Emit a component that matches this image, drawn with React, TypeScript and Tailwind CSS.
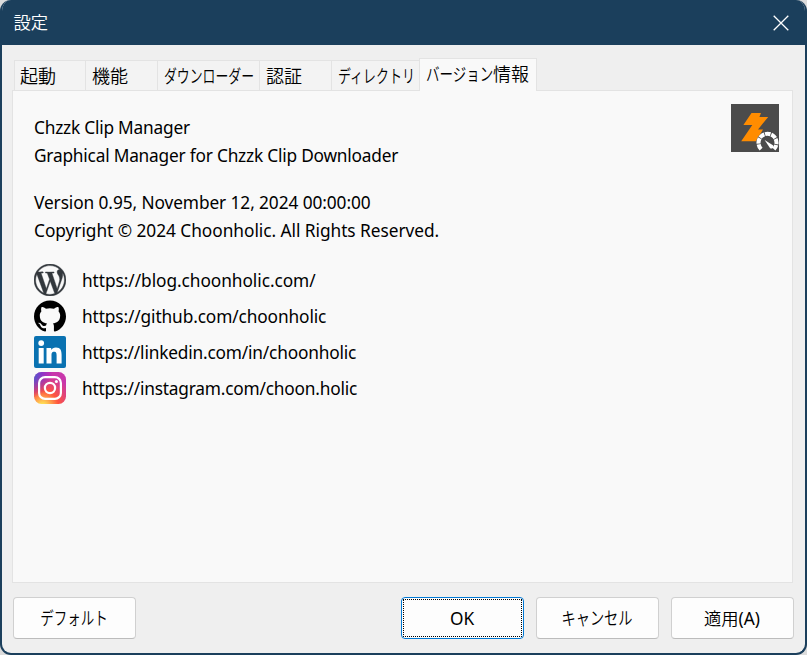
import React from "react";
import { SiWordpress, SiGithub } from "react-icons/si";

const font = "font-['Noto_Sans','Noto_Sans_CJK_JP',sans-serif]";
// Japanese labels use the DemiLight cut of the CJK family.
const lines = [
  { text: "Chzzk Clip Manager", cls: "tracking-[-0.22px]" },
  { text: "Graphical Manager for Chzzk Clip Downloader", cls: "tracking-[-0.21px]" },
  { text: "Version 0.95, November 12, 2024 00:00:00", cls: "mt-[19px] tracking-[-0.09px]" },
  { text: "Copyright © 2024 Choonholic. All Rights Reserved.", cls: "tracking-[-0.04px]" },
];

function InstagramIcon() {
  return (
    <svg viewBox="0 0 32 32" className="size-8">
      <defs>
        <radialGradient id="warm" cx="0.27" cy="1.08" r="1">
          <stop offset="0" stopColor="#ffdd55" />
          <stop offset="0.1" stopColor="#ffdd55" />
          <stop offset="0.5" stopColor="#ff543e" />
          <stop offset="1" stopColor="#c837ab" />
        </radialGradient>
        <radialGradient id="cool" cx="-0.17" cy="0.07" r="0.75">
          <stop offset="0" stopColor="#3771c8" />
          <stop offset="0.13" stopColor="#3771c8" />
          <stop offset="1" stopColor="#6600ff" stopOpacity="0" />
        </radialGradient>
      </defs>
      <rect width="32" height="32" rx="7.5" fill="url(#warm)" />
      <rect width="32" height="32" rx="7.5" fill="url(#cool)" />
      <rect x="5.1" y="5.1" width="21.8" height="21.8" rx="6" fill="none" stroke="#fff" strokeWidth="2.2" />
      <circle cx="16" cy="16" r="5.1" fill="none" stroke="#fff" strokeWidth="2.2" />
      <circle cx="22.4" cy="9.6" r="1.5" fill="#fff" />
    </svg>
  );
}

function LinkedinIcon() {
  return (
    <svg viewBox="0 0 32 32" className="size-8">
      <rect width="32" height="32" rx="2" fill="#0a72b1" />
      <circle cx="7.2" cy="7.1" r="2.9" fill="#fff" />
      <path
        fill="#fff"
        d="M4.7 11.9h5v15.5h-5zM12.5 11.9h4.7v2.2c.8-1.4 2.4-2.6 4.7-2.6 4.8 0 5.7 3.1 5.7 7.3v8.6h-5v-7.6c0-1.8 0-4-2.5-4s-2.6 1.9-2.6 3.9v7.7h-5z"
      />
    </svg>
  );
}

const links = [
  {
    url: "https://blog.choonholic.com/",
    icon: <SiWordpress className="size-8 text-[#32373c]" strokeWidth={0.3} />,
    cls: "tracking-[-0.06px]",
  },
  { url: "https://github.com/choonholic", icon: <SiGithub className="size-8 text-black" />, cls: "tracking-[-0.12px]" },
  { url: "https://linkedin.com/in/choonholic", icon: <LinkedinIcon />, cls: "tracking-[-0.18px]" },
  { url: "https://instagram.com/choon.holic", icon: <InstagramIcon />, cls: "tracking-[-0.2px]" },
];

const tabs = [
  { label: "起動", box: "w-[71px] pl-[5px]", text: "" },
  { label: "機能", box: "w-[72px] pl-[6px]", text: "" },
  { label: "ダウンローダー", box: "w-[102px] pl-[6px]", text: "scale-x-[0.715]" },
  { label: "認証", box: "w-[72px] pl-[6px]", text: "" },
  { label: "ディレクトリ", box: "w-[88px] pl-[6px]", text: "scale-x-[0.72]" },
];

function Button({ children, focused = false }: { children: React.ReactNode; focused?: boolean }) {
  return (
    <button
      className={
        focused
          ? "h-[42px] w-[123px] shrink-0 rounded-[4px] border border-[#0078d4] bg-[#fdfdfd] p-px"
          : "h-[42px] w-[123px] shrink-0 rounded-[4px] border border-[#d0d0d0] border-b-[#bcbcbc] bg-[#fdfdfd] p-px"
      }
    >
      <span
        className={
          focused
            ? "flex size-full items-center justify-center border border-dotted border-black pt-px pr-px"
            : "flex size-full items-center justify-center pt-px pr-px"
        }
      >
        {children}
      </span>
    </button>
  );
}

function AppLogo() {
  return (
    <svg viewBox="0 0 48 48" className="size-12">
      <rect width="48" height="48" fill="#4b4b4b" />
      <path d="M20.5 9H30l-1.6 3.9h8.8L27 25.5h5L25 37.3H10.2L21.3 21h-8.9z" fill="#ff8c00" />
      <path
        d="M30.1 45.1a9 9 0 1 1 12.8 0"
        transform="translate(0 .2)"
        fill="none"
        stroke="#4b4b4b"
        strokeWidth="4.6"
      />
      <circle cx="36.5" cy="38.7" r="7" fill="#4b4b4b" />
      <path
        d="M30.1 45.1a9 9 0 1 1 12.8 0"
        fill="none"
        stroke="#fff"
        strokeWidth="4.1"
        strokeDasharray="5.4 .8"
      />
      <path d="M33.6 36l8.3 5.2c1.6 1.5-.6 4.5-2.8 3z" fill="#fff" />
    </svg>
  );
}

export default function App() {
  return (
    <div className={`h-[655px] w-[807px] bg-[#dcdcdc] text-[17.3px] text-black ${font}`}>
      <div className="flex h-full flex-col overflow-hidden rounded-[11px] border-2 border-t-0 border-[#1b3f5c] bg-[#efefef]">
        <header className="flex h-[45px] shrink-0 items-center justify-between bg-[#1b3f5c] pr-4 pl-[11.5px] text-white">
          <span className="font-[350]">設定</span>
          <svg viewBox="0 0 16 16" className="size-4" fill="none" stroke="#fff" strokeWidth="1.3">
            <path d="M.7.7l14.6 14.6M15.3.7L.7 15.3" />
          </svg>
        </header>

        <nav className="flex h-[45px] shrink-0 items-end pl-3 text-[18px] font-[350]">
          {tabs.map((t) => (
            <div
              key={t.label}
              className={`flex h-[30px] items-center border-t border-l border-[#e3e3e3] bg-[#f3f3f3] pt-px ${t.box}`}
            >
              <span className={`shrink-0 origin-left whitespace-nowrap ${t.text}`}>{t.label}</span>
            </div>
          ))}
          <div className="z-10 -mb-px flex h-[33px] w-[118px] items-center border border-b-0 border-[#e3e3e3] bg-[#f9f9f9] pb-[2px] pl-[6px]">
            <span className="w-[67px] shrink-0 origin-left scale-x-[0.75] whitespace-nowrap">バージョン</span>
            <span className="shrink-0">情報</span>
          </div>
        </nav>

        <main className="ml-[10px] flex h-[493px] w-[781px] shrink-0 justify-between border border-[#e3e3e3] bg-[#f9f9f9] pt-[13px] pr-[13px] pl-[21px]">
          <div>
            <div className="pt-[10px]">
              {lines.map((l) => (
                <p key={l.text} className={`h-7 leading-7 whitespace-nowrap ${l.cls}`}>
                  {l.text}
                </p>
              ))}
            </div>
            <ul className="mt-[17px]">
              {links.map((l) => (
                <li key={l.url} className="flex h-9 items-center gap-4">
                  {l.icon}
                  <span className={`pt-px whitespace-nowrap ${l.cls}`}>{l.url}</span>
                </li>
              ))}
            </ul>
          </div>
          <AppLogo />
        </main>

        <footer className="flex pt-[14px] pl-[11px]">
          <Button>
            <span className="scale-x-[0.75] text-[18px] font-[350] whitespace-nowrap">デフォルト</span>
          </Button>
          <div className="ml-[265px] flex gap-3">
            <Button focused>OK</Button>
            <Button>
              <span className="scale-x-[0.79] text-[18px] font-[350] whitespace-nowrap">キャンセル</span>
            </Button>
            <Button>
              <span className="font-[350]">適用</span>
              <span>(A)</span>
            </Button>
          </div>
        </footer>
      </div>
    </div>
  );
}
